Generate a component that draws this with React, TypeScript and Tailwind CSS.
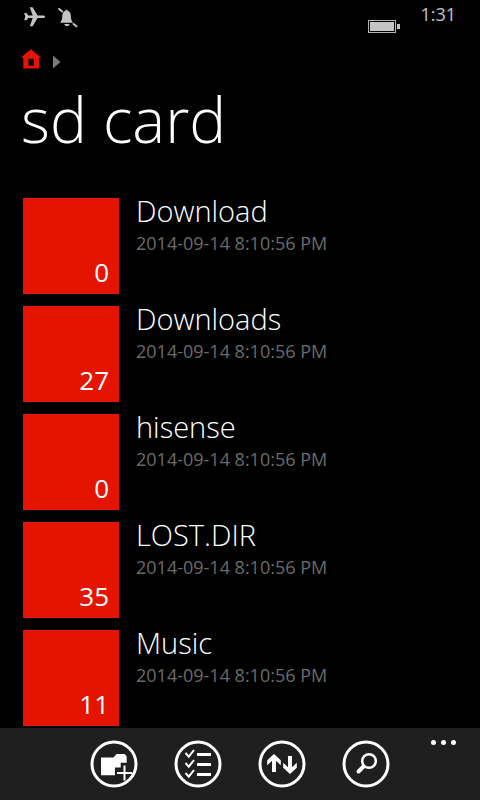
import React from 'react';

interface Folder {
  name: string;
  modified: string;
  count: number;
}

const folders: Folder[] = [
  { name: 'Download', modified: '2014-09-14 8:10:56 PM', count: 0 },
  { name: 'Downloads', modified: '2014-09-14 8:10:56 PM', count: 27 },
  { name: 'hisense', modified: '2014-09-14 8:10:56 PM', count: 0 },
  { name: 'LOST.DIR', modified: '2014-09-14 8:10:56 PM', count: 35 },
  { name: 'Music', modified: '2014-09-14 8:10:56 PM', count: 11 },
];

const AirplaneIcon = () => (
  <svg width="22" height="20" viewBox="0 0 22 20" fill="#c4c4c4">
    <path d="M0.200 6h2.200l2 2.400h4.300L5.800 0.300h2.800l5 8.100h5.600c1.200 0 1.900 0.700 1.900 1.300s-0.700 1.300-1.900 1.300h-5.600l-5 8.200H5.800l2.900-8.200H4.400l-2 2.300H0.200l1-3.700z" />
  </svg>
);

const BellOffIcon = () => (
  <svg width="20" height="21" viewBox="0 0 20 21" fill="#c4c4c4">
    <path d="M8.600 2.800c0.700 0 1 0.400 1.100 0.900c2.200 0.700 3.200 2.600 3.200 5.200c0 3.200 0.600 4.600 2.200 6.800H2.100c1.500-2.200 2.200-3.600 2.200-6.800c0-2.600 1-4.500 3.200-5.200c0-0.500 0.400-0.900 1.100-0.900z" />
    <path d="M6.300 17h5.200c-0.300 1.400-1.200 2.200-2.600 2.200s-2.300-0.800-2.600-2.200z" />
    <path d="M1.200 2l3 2.500M15.600 17l2.800 2.300" stroke="#c4c4c4" strokeWidth="2" strokeLinecap="round" />
  </svg>
);

const BatteryIcon = () => (
  <svg width="32" height="13" viewBox="0 0 32 13">
    <rect x="0.500" y="0.500" width="27" height="12" fill="none" stroke="#b4b4b4" />
    <rect x="2" y="2" width="24" height="9" fill="#c4c4c4" />
    <rect x="29" y="4" width="3" height="5" fill="#c4c4c4" />
  </svg>
);

const HomeIcon = () => (
  <svg width="20" height="20" viewBox="0 0 20 20" fill="#e51400">
    <path fillRule="evenodd" d="M10 0.300L20.300 8.800h-2.300v10.700H2.300V8.800H-0.300zM7.500 9.800v7h5.300v-7z" />
  </svg>
);

const NewFolderIcon = () => (
  <>
    <path d="M11 17.500h12.500l3-3.500h8.200l2 2.500v6.200h-6v4.800H25v7.800H11z" fill="white" />
    <path d="M34.500 25.500v15M27 33h15" stroke="white" strokeWidth="2" />
  </>
);

const ChecklistIcon = () => (
  <>
    <path d="M11.500 13l3.300 3.600l5.200-6.600M11.500 23l3.300 3.600l5.200-6.600M11.500 33l3.300 3.600l5.200-6.600" fill="none" stroke="white" strokeWidth="2" />
    <path d="M23 14.500h14M23 24.500h14M23 34.500h14" stroke="white" strokeWidth="3" />
  </>
);

const SortIcon = () => (
  <path
    d="M16 14l6.800 6.300v5L18 20.800V32h-4V20.800l-4.800 4.500v-5zM32 34l6.800-6.300v-5L34 27.200V16h-4v11.200l-4.800-4.500v5z"
    fill="white"
  />
);

const SearchIcon = () => (
  <>
    <circle cx="27" cy="21" r="6.800" fill="none" stroke="white" strokeWidth="2.500" />
    <path d="M21.500 26.500l-5 5" stroke="white" strokeWidth="4" strokeLinecap="round" />
  </>
);

const actions = [
  { label: 'new folder', Icon: NewFolderIcon },
  { label: 'select', Icon: ChecklistIcon },
  { label: 'sort', Icon: SortIcon },
  { label: 'search', Icon: SearchIcon },
];

const StatusBar = () => (
  <header className="flex h-8 shrink-0 items-start px-6">
    <div className="flex flex-1 gap-3 pt-[7px]">
      <AirplaneIcon />
      <BellOffIcon />
    </div>
    <div className="flex gap-5">
      <div className="pt-5">
        <BatteryIcon />
      </div>
      <time className="text-lg leading-7 text-[#c4c4c4]">1:31</time>
    </div>
  </header>
);

const Breadcrumb = () => (
  <nav className="flex items-center gap-3 px-[21px] pt-[17px]">
    <a href="#home" aria-label="home">
      <HomeIcon />
    </a>
    <svg width="8" height="14" viewBox="0 0 8 14" className="mt-[6px]">
      <path d="M0 0.500L7.500 7L0 13.500z" fill="#7a7a7a" />
    </svg>
  </nav>
);

const FolderRow = ({ folder }: { folder: Folder }) => (
  <li>
    <button type="button" className="flex w-full gap-[17px] text-left">
      <span className="flex size-24 shrink-0 items-end justify-end bg-[#e51400] px-[10px] pb-1 text-[26px] leading-9">
        {folder.count}
      </span>
      <span className="flex min-w-0 flex-col">
        <span className="text-[29px] leading-[26px] font-light">{folder.name}</span>
        <span className="text-lg leading-[38px] text-[#6b6b6b]">{folder.modified}</span>
      </span>
    </button>
  </li>
);

const AppBar = () => (
  <footer className="relative flex h-18 shrink-0 items-center justify-center gap-9 bg-[#1f1f1f]">
    {actions.map(({ label, Icon }) => (
      <button key={label} type="button" aria-label={label}>
        <svg width="48" height="48" viewBox="0 0 48 48" className="block">
          <circle cx="24" cy="24" r="22" fill="none" stroke="white" strokeWidth="3" />
          <Icon />
        </svg>
      </button>
    ))}
    <button type="button" aria-label="more" className="absolute right-6 top-3">
      <svg width="25" height="5" viewBox="0 0 25 5" fill="white" className="block">
        <circle cx="2.500" cy="2.500" r="2.500" />
        <circle cx="12.500" cy="2.500" r="2.500" />
        <circle cx="22.500" cy="2.500" r="2.500" />
      </svg>
    </button>
  </footer>
);

const App: React.FC = () => {
  return (
    <div className="flex h-screen flex-col bg-black font-['Open_Sans',sans-serif] text-white">
      <StatusBar />
      <Breadcrumb />
      <h1 className="px-[21px] text-[62px] leading-[100px] font-light">sd card</h1>
      <main className="min-h-0 flex-1 overflow-y-auto px-[23px] pt-[29px]">
        <ul className="flex flex-col gap-3">
          {folders.map((folder) => (
            <FolderRow key={folder.name} folder={folder} />
          ))}
        </ul>
      </main>
      <AppBar />
    </div>
  );
};

export default App;
